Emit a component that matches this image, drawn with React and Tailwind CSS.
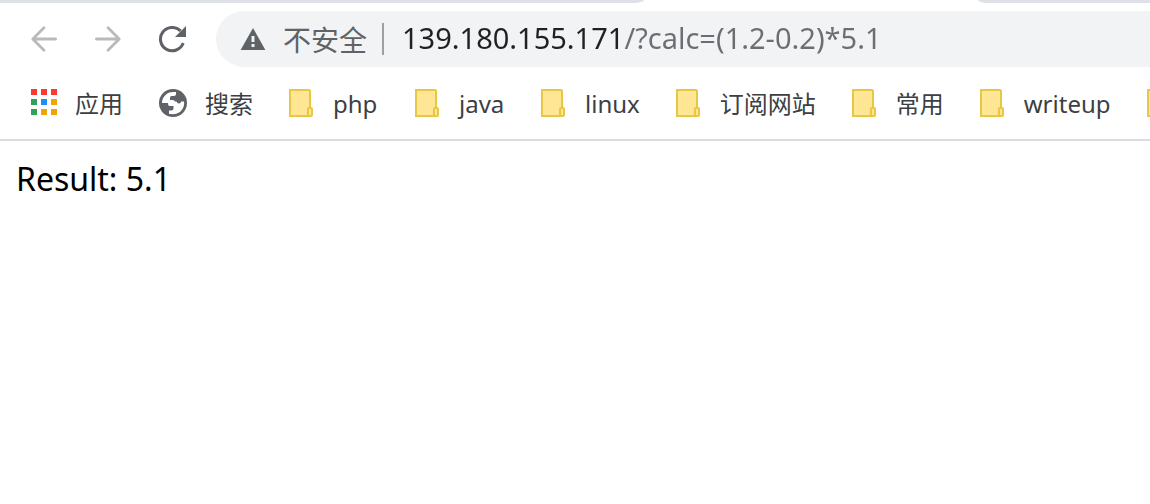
import React from "react";

const FONT = "font-['Noto_Sans','Noto_Sans_CJK_SC',sans-serif]";

function BackIcon() {
  return (
    <svg viewBox="0 0 28 28" className="size-7" fill="none" stroke="#bababb" strokeWidth="2.8" strokeLinecap="round" strokeLinejoin="round" aria-hidden="true">
      <path d="M25.6 14H3M14 2.8L2.8 14L14 25.2" />
    </svg>
  );
}

function ForwardIcon() {
  return (
    <svg viewBox="0 0 28 28" className="size-7" fill="none" stroke="#bababb" strokeWidth="2.8" strokeLinecap="round" strokeLinejoin="round" aria-hidden="true">
      <path d="M2.4 14H25M14 2.8L25.2 14L14 25.2" />
    </svg>
  );
}

function ReloadIcon() {
  return (
    <svg viewBox="0 0 28 28" className="size-7" aria-hidden="true">
      <path d="M25.2 18A11.7 11.7 0 1 1 22.6 6" fill="none" stroke="#5f6368" strokeWidth="3" />
      <path d="M28 1V12H17Z" fill="#5f6368" />
    </svg>
  );
}

function WarningIcon() {
  return (
    <svg viewBox="0 0 26 22" className="h-[22px] w-[26px] shrink-0" aria-hidden="true">
      <path d="M13 0L25.4 22H0.6Z" fill="#5f6368" />
      <path d="M11.5 8h3v6h-3zM11.5 16h3v3h-3z" fill="#f1f3f4" />
    </svg>
  );
}

function AppsIcon() {
  return (
    <svg viewBox="0 0 26 28" className="h-7 w-[26px] shrink-0" aria-hidden="true">
      <path d="M0 0h6v6H0zM10 0h6v6h-6zM20 0h6v6h-6z" fill="#fa3932" />
      <path d="M0 10h6v6H0zM0 20h6v6H0z" fill="#30a05b" />
      <path d="M10 10h6v6h-6z" fill="#1e8ef9" />
      <path d="M20 10h6v6h-6zM10 20h6v6h-6zM20 20h6v6h-6z" fill="#f1a300" />
    </svg>
  );
}

function GlobeIcon() {
  return (
    <svg viewBox="0 0 28 28" className="size-7 shrink-0" aria-hidden="true">
      <circle cx="14" cy="14" r="14" fill="#5f6368" />
      <path d="M3 14A11 11 0 0 1 14 3H17V5Q17 7 15 7H12.5Q11 7 11 8.5V11H13.5Q16 11 16 13V12.5H17.5Q18 14.5 20 14.5Q22 14.5 22 12.5H25A11 11 0 0 1 12 25H10V21.5H12Q14.5 21.5 14.5 19V17H10.5Q9 17 9 14Z" fill="#fff" />
    </svg>
  );
}

function FolderIcon() {
  return (
    <svg viewBox="0 0 24 28" className="h-7 w-6 shrink-0" fill="#ffe694" stroke="#eac645" strokeWidth="2" aria-hidden="true">
      <path d="M1 1H20Q21 1 21 2V27H1Z" />
      <path d="M19 27V20Q19 19 20 19H22Q23 19 23 20V26Q23 27 22 27Z" />
    </svg>
  );
}

const folders = ["php", "java", "linux", "订阅网站", "常用", "writeup"];

function Shortcut({ icon, label }) {
  return (
    <a href="#" className="flex shrink-0 items-center gap-[18px] whitespace-nowrap">
      {icon}
      <span className="pt-0.5">{label}</span>
    </a>
  );
}

function Folder({ label }) {
  return (
    <a href="#" className="flex min-w-[90px] shrink-0 items-center gap-5 whitespace-nowrap">
      <FolderIcon />
      <span className="pt-0.5">{label}</span>
    </a>
  );
}

export default function App() {
  return (
    <div className={`min-h-screen overflow-hidden bg-white text-black ${FONT}`}>
      <div className="flex h-[3px] justify-between">
        <div className="w-[56%] rounded-br-[10px_3px] bg-[#dee1e6]" />
        <div className="w-[15%] rounded-bl-[10px_3px] bg-[#dee1e6]" />
      </div>
      <header className="border-b-2 border-[#dadce0]">
        <div className="flex items-center pt-2 pl-[30px]">
          <nav className="flex items-center gap-9" aria-label="Navigation">
            <button type="button" aria-label="Back"><BackIcon /></button>
            <button type="button" aria-label="Forward"><ForwardIcon /></button>
            <button type="button" aria-label="Reload"><ReloadIcon /></button>
          </nav>
          <div className="ml-[30px] flex h-14 min-w-0 flex-1 items-center rounded-l-full bg-[#f1f3f4] pl-6">
            <WarningIcon />
            <button type="button" className="ml-[17px] shrink-0 pt-0.5 text-[28px] leading-9 text-[#5f6368]">不安全</button>
            <div className="mr-[18px] ml-[15px] h-8 w-0.5 shrink-0 bg-[#9aa0a6]" />
            <input
              type="text"
              aria-label="Address"
              defaultValue="139.180.155.171/?calc=(1.2-0.2)*5.1"
              className="min-w-0 flex-1 bg-[linear-gradient(to_right,#202124_222px,#6b6e72_222px)] bg-clip-text pb-0.5 text-[29px] leading-9 text-transparent caret-black outline-none"
            />
          </div>
        </div>
        <nav className="flex h-[72px] items-center gap-9 overflow-hidden pl-[31px] text-[24px] leading-8 text-[#3c4043]" aria-label="Bookmarks">
          <Shortcut icon={<AppsIcon />} label="应用" />
          <Shortcut icon={<GlobeIcon />} label="搜索" />
          {folders.map((name) => (
            <Folder key={name} label={name} />
          ))}
          <a href="#" aria-label="More bookmarks" className="shrink-0">
            <FolderIcon />
          </a>
        </nav>
      </header>
      <main className="px-4 py-4 text-[32px] leading-[44px]">Result: 5.1</main>
    </div>
  );
}
